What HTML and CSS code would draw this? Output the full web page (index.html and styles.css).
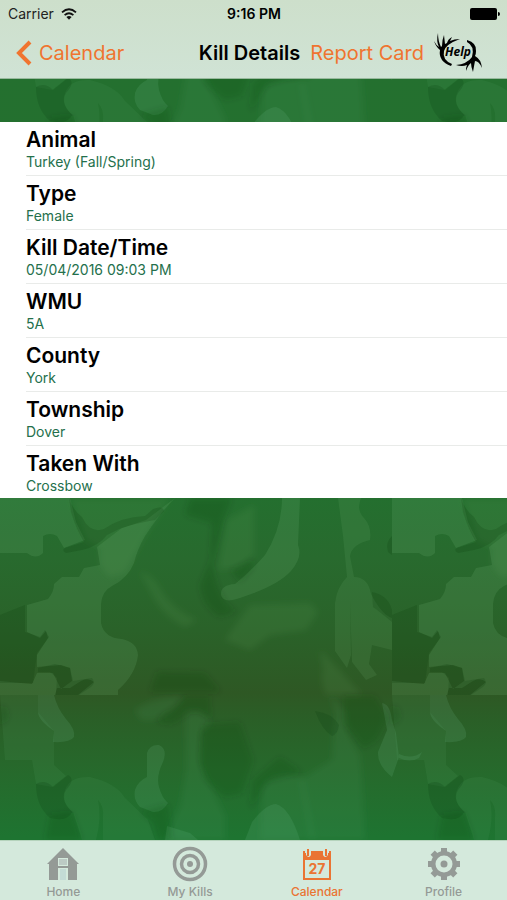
FILE: index.html
```html
<!DOCTYPE html>
<html lang="en">
<head>
<meta charset="utf-8">
<meta name="viewport" content="width=device-width, initial-scale=1">
<title>Kill Details</title>
<link rel="stylesheet" href="styles.css">
</head>
<body>
<div class="app">
  <svg class="camo" viewBox="0 0 507 900" preserveAspectRatio="xMidYMin slice" aria-hidden="true">
    <defs>
      <linearGradient id="base" x1="0" y1="0" x2="0" y2="900" gradientUnits="userSpaceOnUse">
        <stop offset="0" stop-color="#24702f"/>
        <stop offset=".54" stop-color="#23702f"/>
        <stop offset=".62" stop-color="#286a2e"/>
        <stop offset=".7" stop-color="#2a6229"/>
        <stop offset=".77" stop-color="#2e5824"/>
        <stop offset=".8" stop-color="#2a5f27"/>
        <stop offset=".86" stop-color="#266a2c"/>
        <stop offset=".93" stop-color="#1e7431"/>
      </linearGradient>
      <filter id="soft" x="-10%" y="-10%" width="120%" height="120%"><feGaussianBlur stdDeviation="3"/></filter>
      <g id="lower">
        <g fill="#8fd3b0" fill-opacity=".12">
          <path d="M38 695H54Q57 708 66 719Q76 730 74 737Q70 743 53 742L54 731Q38 720 38 712Z"/>
          <path d="M147 753Q150 744 159 745Q168 749 163 762Q156 776 159 787Q162 798 168 803Q162 813 153 812L140 807Q133 800 135 790Q138 781 147 777Z"/>
          <path d="M252 822Q266 804 276 804Q290 808 300 840H245Z"/>
          <path d="M382 703Q390 704 392 720L396 733L399 757L392 777Q377 765 378 752L387 730Z"/>
          <path d="M399 754Q412 760 422 752L419 758Q410 763 399 758Z"/>
          <path d="M167 826L190 833 198 840H165Z"/>
        </g>
        <g fill="#57a36b" fill-opacity=".12">
          <path d="M65 790Q70 776 90 777Q116 783 125 798L148 820 155 840H103V817Q104 806 98 800Q102 818 96 840H82L73 812Q60 802 65 790Z"/>
          <path d="M0 695H38V712L54 731V765L66 776 52 787 36 784 32 760 5 760Z"/>
        </g>
        <g fill="#57a36b" fill-opacity=".13" filter="url(#soft)">
          <path d="M135 710Q155 696 184 697L170 711Q155 724 140 719Z"/>
          <path d="M185 712Q200 706 212 722L200 733V765L225 815V840H165L180 805 186 770Z"/>
          <path d="M330 695L345 712 347 732 360 755 363 800 365 840H310L300 780 332 760 333 735 336 715Z"/>
          <path d="M262 790Q270 770 303 777L315 840H260Z"/>
        </g>
        <g fill="#04350c" fill-opacity=".17">
          <path d="M36 784Q45 779 53 787L68 775Q76 779 66 790Q60 800 72 812Q68 822 50 818Q36 806 36 784Z"/>
          <path d="M315 711Q332 713 339 725Q338 734 332 736Q322 730 315 711Z"/>
        </g>
        <g fill="#04350c" fill-opacity=".17" filter="url(#soft)">
          <path d="M157 722Q160 714 174 709L185 696H210L211 722Q198 704 185 716L172 724Z"/>
          <path d="M203 725L240 722 253 760 242 793 225 797 205 780 200 758Z"/>
          <path d="M344 696H375L388 718 377 740 364 748 344 723Z"/>
          <path d="M140 812L168 804 172 840H158L153 822Z"/>
          <path d="M253 780L280 757 302 772 266 782 250 810Z"/>
          <path d="M50 815L72 812 82 840H45Z"/>
          <path d="M0 705Q10 708 7 720L0 726Z"/>
        </g>
      </g>
      <g id="upper">
        <g fill="#79b87b" fill-opacity=".17">
          <path d="M0 498H70L76 522 85 540 64 548 57 536Q50 532 43 536V553Q36 560 27 553H0Z"/>
          <path d="M175 498Q160 513 145 536Q137 550 134 563Q128 578 112 586Q102 591 101 604V623Q104 638 122 639Q137 642 138 655Q136 674 118 690V695H78L94 682Q88 677 81 681L70 688H57L55 695H0V681L32 684 37 673H53L61 689 72 681 70 668 61 665 37 667V655L48 638 46 631 40 638 27 632V605L48 599Q54 592 54 584L62 577H79L84 568 100 565 97 547 122 528 146 520Z"/>
          <path d="M282 498H300L298 545Q303 557 291 571Q280 583 254 593L240 598Q223 604 221 595Q220 585 235 584Q250 572 265 555Q282 528 282 498Z"/>
          <path d="M338 498H361Q356 510 364 518Q372 527 370 540Q352 544 350 556L354 577Q368 577 371 594Q382 615 392 618V650L372 645 369 664 377 675 366 680 352 662 350 600 351 655 347 668 335 651V603Q337 587 347 577L343 536Z" fill-opacity=".13"/>
        </g>
        <g fill="#75aa60" fill-opacity=".12" filter="url(#soft)">
          <path d="M70 498H170L145 536 125 573 109 577 100 565V548L85 540Z"/>
          <path d="M140 572Q153 574 164 595Q175 610 197 620L185 627Q166 618 155 600Z"/>
          <path d="M227 520L254 505V555L237 568 218 570Z"/>
          <path d="M250 605L310 603 318 612 306 630 270 635 250 650 225 640Z"/>
          <path d="M320 650L335 665 362 695H326Q320 682 323 670Z"/>
        </g>
        <g fill="#08390d" fill-opacity=".19">
          <path d="M69 498Q72 509 82 517Q90 534 104 529Q121 517 145 516L153 509Q163 505 164 511L155 520Q136 523 119 529L107 535Q99 546 82 550L66 553Q61 550 65 548L84 542Q77 531 71 512Z"/>
          <path d="M0 615L25 605V632L40 637 45 630 49 637 37 653 33 683H0Z"/>
          <path d="M38 668L55 664 70 668 73 681 92 678Q96 683 91 687L79 695H56L57 678 50 672H38Z"/>
          <path d="M372 592Q388 595 392 610V622Q380 612 373 607Z"/>
          <path d="M392 536Q385 542 388 552L392 555Z"/>
        </g>
        <g fill="#08390d" fill-opacity=".19" filter="url(#soft)">
          <path d="M190 498H232L223 520 212 565Q220 604 237 611L220 617Q202 607 200 585L210 560 212 523 185 515Z"/>
          <path d="M231 570L253 560V568L240 582Z"/>
          <path d="M157 672L205 673 221 692H150Z"/>
        </g>
      </g>
      <g id="tile"><use href="#upper"/><use href="#lower"/></g>
    </defs>
    <rect width="507" height="900" fill="url(#base)"/>
    <use href="#lower" y="-697"/>
    <use href="#lower" x="392" y="-697"/>
    <use href="#tile"/>
    <use href="#tile" x="392"/>
  </svg>

  <header class="top">
    <div class="status">
      <span class="carrier">Carrier
        <svg class="wifi" viewBox="0 0 16 12" aria-hidden="true"><g fill="none" stroke="#111" stroke-width="1.8"><path d="M1 4.400Q8-1.800 15 4.400"/><path d="M3.600 7.200Q8 3.300 12.400 7.200"/></g><path d="M5.400 9Q8 6.900 10.600 9L8 11.700Z" fill="#111"/></svg>
      </span>
      <span class="time">9:16 PM</span>
      <svg class="battery" viewBox="0 0 30 12" role="img" aria-label="Battery full"><rect width="27" height="12" rx="2"/><path d="M28 4Q30 4 30 6T28 8Z"/></svg>
    </div>
    <nav class="nav">
      <a class="back" href="#calendar">
        <svg class="chevron" viewBox="0 0 16 26" aria-hidden="true"><path d="M14 2L3 13L14 24" fill="none" stroke="currentColor" stroke-width="4"/></svg>
        Calendar
      </a>
      <h1 class="title">Kill Details</h1>
      <a class="report" href="#report">Report Card</a>
      <button class="help" type="button" aria-label="Help">
        <svg viewBox="0 0 48 40" aria-hidden="true">
          <path d="M0 8Q2 14 6 17Q4 28 17 33L18 31Q8 27 10 18Q12 11 26 6Q20 6 16 8L18 4Q14 6 13 10L11 11L10 2Q8 7 8 13L7 14Q4 8 4 0Q2 8 5 14Q2 12 0 8Z"/>
          <path d="M33 7Q43 10 42 18Q42 21 41 23Q47 26 48 35Q45 28 41 28Q40 33 39 39Q37 34 37 30Q34 32 32 38Q32 34 33 32Q28 34 22 32Q33 31 38 24Q41 13 33 9Z"/>
          <text x="24" y="23" text-anchor="middle">Help</text>
        </svg>
      </button>
    </nav>
  </header>

  <main class="content">
    <dl class="details">
      <div class="row"><dt>Animal</dt><dd>Turkey (Fall/Spring)</dd></div>
      <div class="row"><dt>Type</dt><dd>Female</dd></div>
      <div class="row"><dt>Kill Date/Time</dt><dd>05/04/2016 09:03 PM</dd></div>
      <div class="row"><dt>WMU</dt><dd>5A</dd></div>
      <div class="row"><dt>County</dt><dd>York</dd></div>
      <div class="row"><dt>Township</dt><dd>Dover</dd></div>
      <div class="row"><dt>Taken With</dt><dd>Crossbow</dd></div>
    </dl>
  </main>

  <nav class="tabs">
    <a class="tab" href="#home">
      <svg viewBox="0 0 36 36" aria-hidden="true"><path fill="currentColor" fill-rule="evenodd" d="M18 2L34 18H32V34H23V22H13V34H4V18H2ZM13 12V20H23V12Z"/><path d="M14 13H22V19H14Z" fill="#bccac4"/><path d="M15 23H21V34H15Z" fill="#c3dbd5"/></svg>
      Home
    </a>
    <a class="tab" href="#kills">
      <svg viewBox="0 0 36 36" aria-hidden="true"><g fill="none" stroke="currentColor" stroke-width="3.500"><circle cx="18" cy="18" r="15.500"/><circle cx="18" cy="18" r="8.500"/></g><circle cx="18" cy="18" r="3" fill="currentColor"/></svg>
      My Kills
    </a>
    <a class="tab active" href="#calendar" aria-current="page">
      <svg viewBox="0 0 36 36" aria-hidden="true"><path fill="currentColor" fill-rule="evenodd" d="M4 5H32V34H4ZM6 14V32H30V14Z"/><path d="M4 3H12V9Q10 13 7 9V7H4ZM24 3H32V7H29V9Q26 13 24 9ZM12 3H24V5H12Z" fill="#d4e9dc"/><path d="M4 5H6V14H4ZM30 5H32V14H30ZM8 3H10V10H8ZM26 3H28V10H26Z" fill="currentColor"/><text class="day" x="18" y="28" text-anchor="middle">27</text></svg>
      Calendar
    </a>
    <a class="tab" href="#profile">
      <svg viewBox="0 0 36 36" aria-hidden="true"><g fill="currentColor"><path id="teeth" d="M15 2H21V34H15ZM2 15H34V21H2Z"/><use href="#teeth" transform="rotate(45 18 18)"/><circle cx="18" cy="18" r="13"/></g><circle cx="18" cy="18" r="8.500" fill="#d4e9dc"/><circle cx="18" cy="18" r="3.500" fill="currentColor"/></svg>
      Profile
    </a>
  </nav>
</div>
</body>
</html>
```
FILE: styles.css
```css
* { box-sizing: border-box; }

body {
  margin: 0;
  font-family: Inter, "Liberation Sans", sans-serif;
  color: #000;
}

a { color: inherit; text-decoration: none; }

.app {
  position: relative;
  isolation: isolate;
  display: flex;
  flex-direction: column;
  min-height: 100vh;
  overflow: hidden;
}

.camo {
  position: absolute;
  inset: 0;
  z-index: -1;
  width: 100%;
  height: 100%;
}

.top {
  background: linear-gradient(#cddfcb, #d0e3d5);
  border-bottom: 1px solid #98b99d;
}

.status {
  display: grid;
  grid-template-columns: 1fr auto 1fr;
  align-items: center;
  height: 27px;
  padding: 0 7px 0 8px;
  font-size: 14px;
}

.carrier { display: flex; align-items: center; gap: 7px; color: #222; }
.wifi { width: 16px; height: 12px; }
.time { font-weight: 600; }
.battery { width: 30px; height: 12px; justify-self: end; }

.nav {
  display: flex;
  align-items: center;
  gap: 10px;
  height: 51px;
  padding: 0 25px 0 16px;
  font-size: 20px;
  white-space: nowrap;
}

.back, .report { color: #f0742f; }
.back { display: flex; flex: 1; align-items: center; gap: 7px; }
.chevron { width: 16px; height: 26px; }
.title { margin: 0; font-size: 20px; font-weight: 600; }

.help {
  width: 48px;
  height: 40px;
  padding: 0;
  border: 0;
  background: none;
}

.help svg { display: block; width: 48px; height: 40px; }
.help text { font: italic 700 12px "Open Sans", sans-serif; }

.content { flex: 1; padding-top: 43px; }

.details { margin: 0; padding-left: 26px; background: #fff; }

.row { padding: 5px 0 4px; }
.row:last-child { padding-bottom: 3px; }
.row + .row { border-top: 1px solid #e9ebe9; }
.row dt { font-size: 21px; font-weight: 600; line-height: 26px; }
.row dd { margin: 0; font-size: 14px; line-height: 18px; color: #24704c; }

.tabs {
  display: grid;
  grid-template-columns: repeat(4, 1fr);
  height: 60px;
  background: #d4e9dc;
  border-top: 1px solid #b5d3bc;
}

.tab {
  display: flex;
  flex-direction: column;
  align-items: center;
  gap: 2px;
  padding-top: 5px;
  font-size: 12px;
  font-weight: 500;
  line-height: 16px;
  color: #949a96;
}

.tab svg { width: 36px; height: 36px; }
.tab.active { color: #ea7433; }
.day { font: 700 14px Inter, sans-serif; fill: currentColor; }
```
